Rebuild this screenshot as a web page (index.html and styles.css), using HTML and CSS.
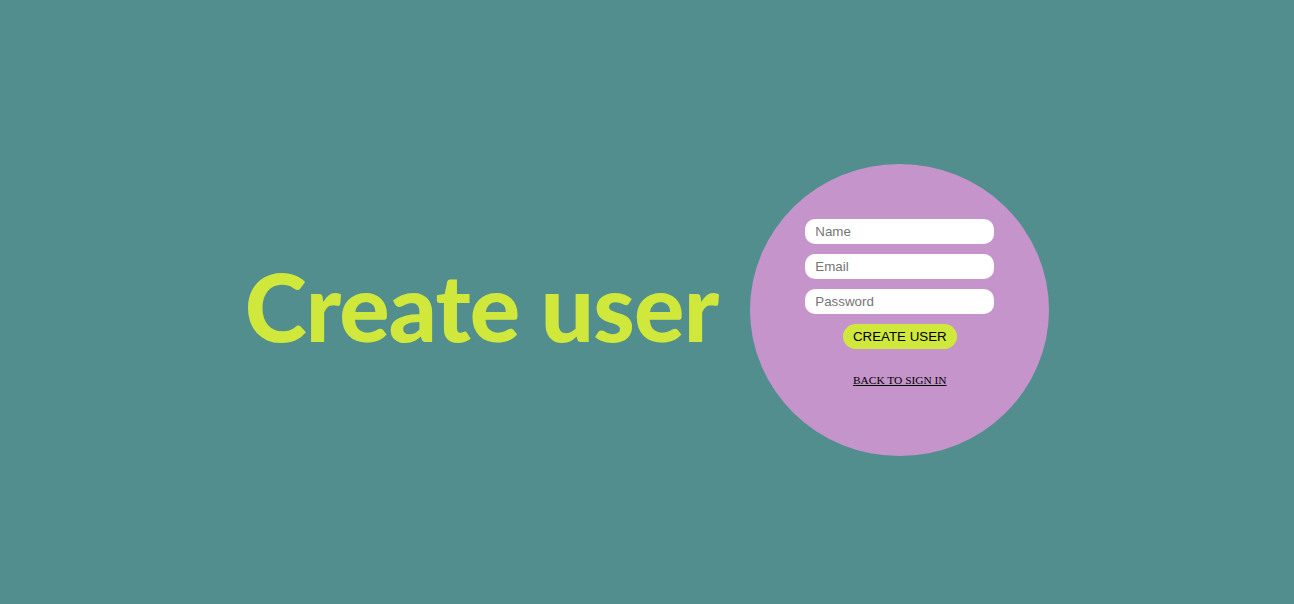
FILE: index.html
```html
<!DOCTYPE html>
<html lang="en">
<head>
<meta charset="utf-8">
<title>Create user</title>
<link rel="stylesheet" href="styles.css">
</head>
<body>
<main class="page">
  <h1 class="title">Create user</h1>
  <form class="bubble">
    <input class="field" type="text" placeholder="Name">
    <input class="field" type="email" placeholder="Email">
    <input class="field" type="password" placeholder="Password">
    <button class="create" type="button">CREATE USER</button>
    <a class="back" href="#">BACK TO SIGN IN</a>
  </form>
</main>
</body>
</html>
```
FILE: styles.css
```css
html, body {
  margin: 0;
  padding: 0;
  background: #528e8e;
}
.page {
  box-sizing: border-box;
  height: 604px;
  padding-top: 16px;
  display: flex;
  align-items: center;
  justify-content: center;
  gap: 32px;
}
.title {
  margin: 0;
  font-family: Lato, "Noto Sans", sans-serif;
  font-weight: 900;
  font-size: 94px;
  line-height: 1;
  color: #d0e83c;
  letter-spacing: -0.8px;
  position: relative;
  top: -4px;
}
.bubble {
  box-sizing: border-box;
  width: 299px;
  height: 292px;
  border-radius: 50%;
  background: #c594cb;
  display: flex;
  flex-direction: column;
  align-items: center;
  padding-top: 55px;
}
.field {
  box-sizing: border-box;
  width: 189px;
  height: 25px;
  border: none;
  border-radius: 10px;
  padding: 0 10px;
  margin-bottom: 10px;
  background: #fff;
  font-family: Arial, "Liberation Sans", sans-serif;
  font-size: 13.333px;
  outline: none;
}
.field::placeholder {
  color: #757575;
}
.create {
  box-sizing: border-box;
  width: 114px;
  height: 25px;
  border: none;
  border-radius: 13px;
  background: #d0e83c;
  color: #000;
  font-family: Arial, "Liberation Sans", sans-serif;
  font-size: 13.333px;
  padding: 0;
}
.back {
  margin-top: 25px;
  font-family: "Liberation Serif", "Times New Roman", serif;
  font-size: 11.4px;
  color: #000;
  text-decoration: underline;
}
```
